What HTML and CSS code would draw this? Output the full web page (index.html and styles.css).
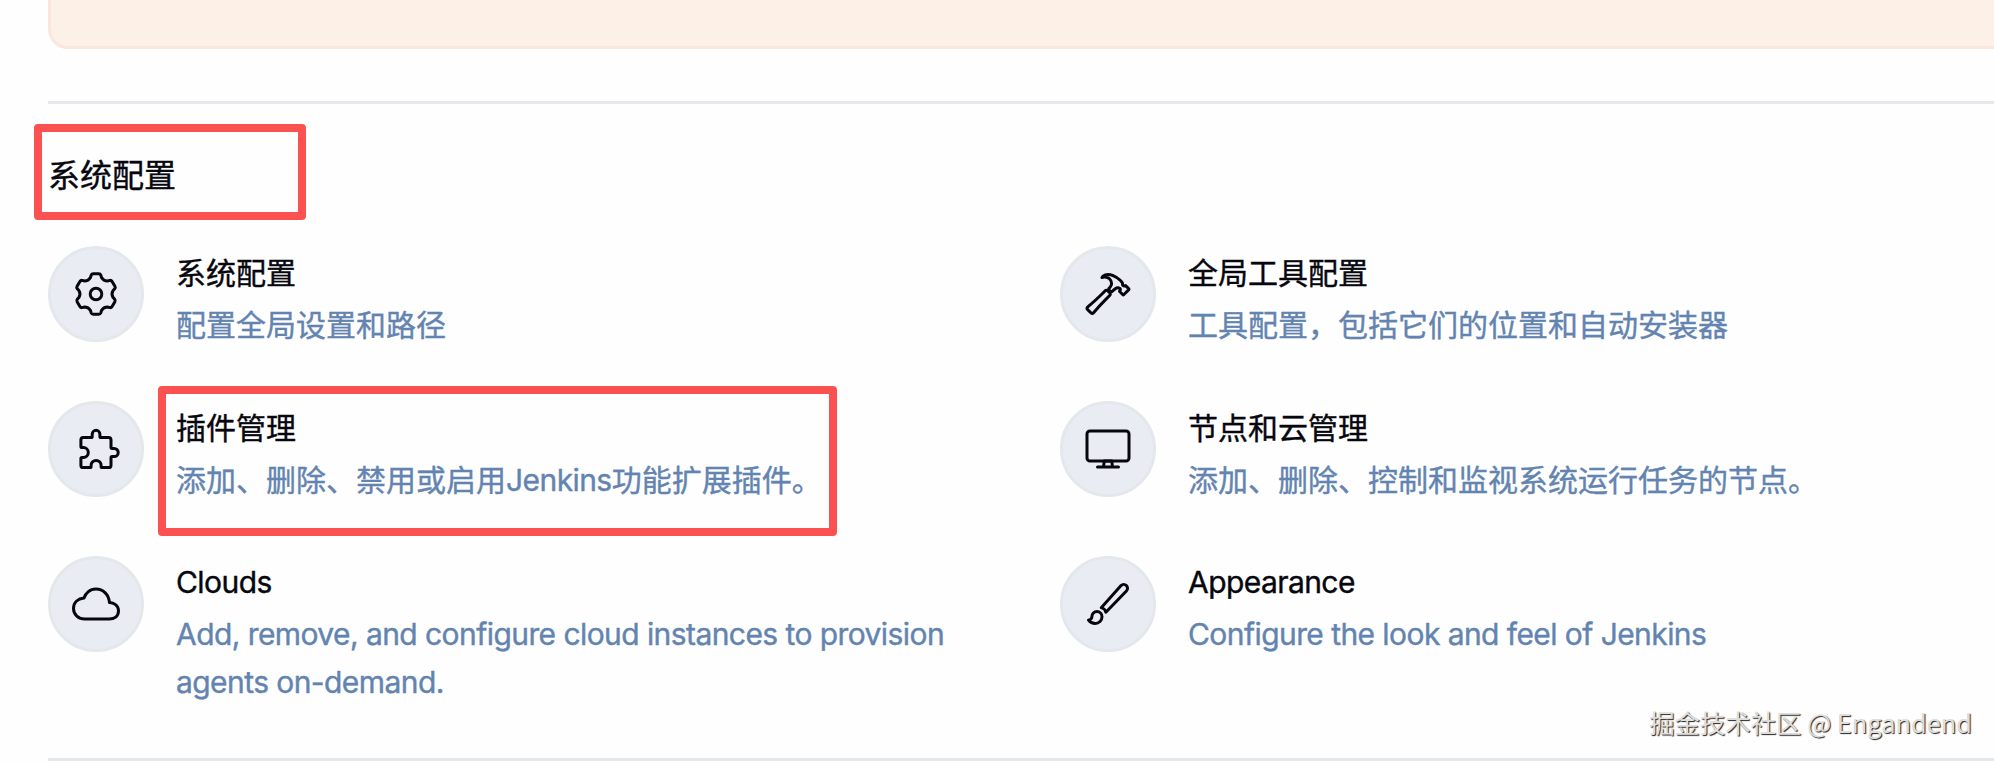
FILE: index.html
```html
<!DOCTYPE html>
<html lang="zh-CN">
<head>
    <meta charset="UTF-8">
    <meta name="viewport" content="width=device-width, initial-scale=1.0">
    <title>Jenkins</title>
    <link rel="stylesheet" href="styles.css">
</head>
<body>
    <main class="page">
        <div class="alert"></div>

        <section class="section">
            <h2 class="section-title">系统配置</h2>
            <div class="items">
                <a class="item">
                    <div class="item-icon">
                        <svg viewBox="-24 -24 48 48">
                            <path d="M-2.8 -20.2H2.8Q4.3 -20.2 4.9 -18.7L5.5 -16.5Q7.5 -13 11.5 -13L13.75 -13.6Q15.35 -13.8 16.1 -12.5L18.9 -7.7Q19.65 -6.4 18.65 -5.1L17.05 -3.5Q15 0 17.05 3.5L18.65 5.1Q19.65 6.4 18.9 7.7L16.1 12.5Q15.35 13.8 13.75 13.6L11.5 13Q7.5 13 5.5 16.5L4.9 18.7Q4.3 20.2 2.8 20.2H-2.8Q-4.3 20.2 -4.9 18.7L-5.5 16.5Q-7.5 13 -11.5 13L-13.75 13.6Q-15.35 13.8 -16.1 12.5L-18.9 7.7Q-19.65 6.4 -18.65 5.1L-17.05 3.5Q-15 0 -17.05 -3.5L-18.65 -5.1Q-19.65 -6.4 -18.9 -7.7L-16.1 -12.5Q-15.35 -13.8 -13.75 -13.6L-11.5 -13Q-7.5 -13 -5.5 -16.5L-4.9 -18.7Q-4.3 -20.2 -2.8 -20.2Z"/>
                            <circle cx="0" cy="0" r="5.8"/>
                        </svg>
                    </div>
                    <div class="item-text">
                        <div class="item-name">系统配置</div>
                        <div class="item-desc">配置全局设置和路径</div>
                    </div>
                </a>
                <a class="item">
                    <div class="item-icon">
                        <svg class="ion" viewBox="0 0 512 512">
                            <path d="M277.42 247a24.68 24.68 0 00-4.08-5.47L255 223.44a21.63 21.63 0 00-6.56-4.57 20.93 20.93 0 00-23.28 4.27c-6.36 6.26-18 17.68-39 38.43C146 301.3 71.43 367.89 37.71 396.29a16 16 0 00-1.09 23.54l39 39.43a16.13 16.13 0 0023.67-.89c29.24-34.37 96.3-109 136-148.23 20.39-20.06 31.82-31.58 38.29-37.94a21.76 21.76 0 003.84-25.2zM478.43 201l-34.31-34a5.44 5.44 0 00-4-1.59 5.59 5.59 0 00-4 1.59h0a11.41 11.41 0 01-9.55 3.27c-4.48-.49-9.25-1.88-12.33-4.86-7-6.86 1.09-20.36-5.07-29a242.88 242.88 0 00-23.08-26.72c-7.06-7-34.81-33.47-81.55-52.53a123.79 123.79 0 00-47-9.24c-26.35 0-46.61 11.76-54 18.51-5.88 5.32-12 13.77-12 13.77a91.29 91.29 0 0110.81-3.2 79.53 79.53 0 0123.28-1.49C241.19 76.8 259.94 84.1 270 92c16.21 13 23.18 30.39 24.27 52.83.8 16.69-15.23 37.76-30.44 54.94a7.85 7.85 0 00.4 10.83l21.24 21.23a8 8 0 0011.14.1c13.93-13.51 31.09-28.47 40.82-34.46s17.58-7.68 21.35-8.09a35.71 35.71 0 0121.3 4.62 13.65 13.65 0 013.08 2.38c6.46 6.56 6.07 17.28-.5 23.74l-2 1.89a5.5 5.5 0 000 7.84l34.31 34a5.5 5.5 0 004 1.58 5.65 5.65 0 004-1.58L478.43 209a5.82 5.82 0 000-8z"/>
                        </svg>
                    </div>
                    <div class="item-text">
                        <div class="item-name">全局工具配置</div>
                        <div class="item-desc">工具配置，包括它们的位置和自动安装器</div>
                    </div>
                </a>
                <a class="item">
                    <div class="item-icon">
                        <svg viewBox="0 0 48 48">
                            <path d="M11.3 12.5H19.1Q20.2 12.5 20.2 11.4V9.2A3.85 3.85 0 0 1 27.9 9.2V11.4Q27.9 12.5 29 12.5H36.6Q39 12.5 39 14.9V22.3Q39 23.4 40.1 23.4H42.1A4.1 4.1 0 0 1 42.1 31.6H40.1Q39 31.6 39 32.7V40.2Q39 42.6 36.6 42.6H30.2Q29.1 42.6 29.1 41.5V40.4A5 5 0 0 0 19.1 40.4V41.5Q19.1 42.6 18 42.6H11.3Q8.9 42.6 8.9 40.2V33.5Q8.9 32.4 10 32.4H11.4A4.9 4.9 0 0 0 11.4 22.6H10Q8.9 22.6 8.9 21.5V14.9Q8.9 12.5 11.3 12.5Z"/>
                        </svg>
                    </div>
                    <div class="item-text">
                        <div class="item-name">插件管理</div>
                        <div class="item-desc">添加、删除、禁用或启用<span class="latin">Jenkins</span>功能扩展插件。</div>
                    </div>
                </a>
                <a class="item">
                    <div class="item-icon">
                        <svg class="ion" viewBox="0 0 512 512">
                            <rect x="32" y="64" width="448" height="320" rx="32" ry="32"/>
                            <path d="M304 448l-8-64h-80l-8 64h96zM368 448H144"/>
                        </svg>
                    </div>
                    <div class="item-text">
                        <div class="item-name">节点和云管理</div>
                        <div class="item-desc">添加、删除、控制和监视系统运行任务的节点。</div>
                    </div>
                </a>
                <a class="item">
                    <div class="item-icon">
                        <svg class="ion" viewBox="0 0 512 512">
                            <path d="M400 240c-8.89-89.54-71-144-144-144-69 0-113.44 48.2-128 96-60 6-112 43.59-112 112 0 66 54 112 120 112h260c55 0 100-27.44 100-88 0-59.82-53-85.76-96-88z"/>
                        </svg>
                    </div>
                    <div class="item-text latin">
                        <div class="item-name">Clouds</div>
                        <div class="item-desc">Add, remove, and configure cloud instances to provision agents on-demand.</div>
                    </div>
                </a>
                <a class="item">
                    <div class="item-icon">
                        <svg class="ion" viewBox="0 0 512 512">
                            <path d="M452.37 59.63h0a40.49 40.49 0 00-57.26 0L184 294.74c23.08 4.7 46.12 27.29 49.26 49.26l219.11-227.11a40.48 40.48 0 000-57.26zM138 336c-29.88 0-54 24.5-54 54.86 0 23.95-20.88 36.57-36 36.57C64.56 449.74 92.82 464 120 464c39.78 0 72-32.73 72-73.14 0-30.36-24.12-54.86-54-54.86z"/>
                        </svg>
                    </div>
                    <div class="item-text latin">
                        <div class="item-name">Appearance</div>
                        <div class="item-desc">Configure the look and feel of Jenkins</div>
                    </div>
                </a>
            </div>
        </section>
    </main>

    <!-- highlight frames -->
    <div class="mark mark-title"></div>
    <div class="mark mark-plugins"></div>

    <div class="watermark">掘金技术社区 @ Engandend</div>
</body>
</html>
```
FILE: styles.css
```css
* {
    margin: 0;
    padding: 0;
    box-sizing: border-box;
}

body {
    position: relative;
    height: 762px;
    overflow: hidden;
    background: #fefefe;
    color: #07070f;
    font-family: Inter, "Noto Sans CJK SC", sans-serif;
    font-size: 30px;
}

.page {
    padding-left: 48px;
}

.alert {
    height: 49px;
    background: #fdf0e6;
    border: 3px solid #f9e7de;
    border-width: 0 0 3px 3px;
    border-bottom-left-radius: 20px;
}

.section {
    margin-top: 52px;
    height: 660px;
    padding-top: 52px;
    border-top: 3px solid #e6e7ea;
    border-bottom: 3px solid #e6e7ea;
}

.section-title {
    margin-bottom: 50px;
    font-size: 32px;
    font-weight: 400;
    line-height: 40px;
    -webkit-text-stroke: 0.4px;
}

.items {
    display: grid;
    grid-template-columns: 1012px 1fr;
    grid-auto-rows: 155px;
}

.item {
    display: flex;
    align-items: flex-start;
    gap: 32px;
    padding-right: 48px;
}

.item-icon {
    display: flex;
    align-items: center;
    justify-content: center;
    flex-shrink: 0;
    width: 96px;
    height: 96px;
    border: 3px solid #e4e7eb;
    border-radius: 50%;
    background: #e9edf3;
}

.item-icon svg {
    width: 48px;
    height: 48px;
    flex-shrink: 0;
    fill: none;
    stroke: #07070f;
    stroke-width: 3;
    stroke-linecap: round;
    stroke-linejoin: round;
}

.item-icon .ion {
    stroke-width: 32;
}

.item-text {
    padding-top: 3px;
    line-height: 48px;
    -webkit-text-stroke: 0.4px;
}

.item-text.latin {
    padding-top: 2px;
}

.latin {
    letter-spacing: -0.57px;
}

.item-name {
    margin-bottom: 4px;
}

.item-desc {
    color: #6384b0;
}

.mark {
    position: absolute;
    border: 8px solid #fb5150;
    border-radius: 4px;
}

.mark-title {
    left: 34px;
    top: 124px;
    width: 272px;
    height: 96px;
}

.mark-plugins {
    left: 158px;
    top: 386px;
    width: 679px;
    height: 150px;
}

.watermark {
    position: absolute;
    right: 22px;
    bottom: 22px;
    color: #dedede;
    font-family: "Noto Sans CJK SC", sans-serif;
    font-size: 25.4px;
    line-height: 36px;
    text-shadow: 1px 1px 1px #222;
}
```
